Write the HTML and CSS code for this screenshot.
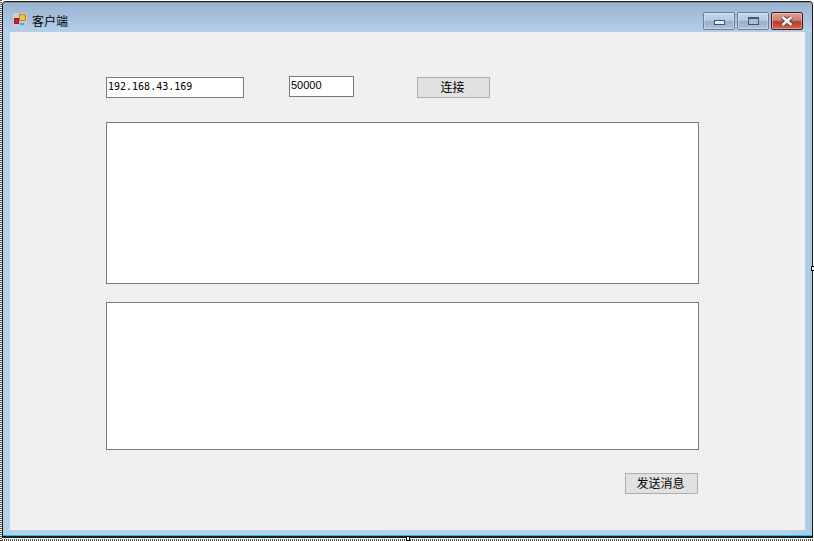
FILE: index.html
```html
<!DOCTYPE html>
<html lang="zh">
<head>
<meta charset="utf-8">
<title>客户端</title>
<link rel="stylesheet" href="styles.css">
</head>
<body>
<div class="designer">
  <div class="window">
    <div class="titlebar">
      <svg class="app-icon" width="14" height="14" viewBox="0 0 14 14">
        <rect x="0" y="0" width="14" height="14" fill="#c5ced8"/>
        <rect x="1.5" y="5.5" width="4" height="5" fill="#d9201c" stroke="#9c1a16"/>
        <rect x="6.5" y="1.5" width="6" height="6" fill="#f6c332" stroke="#b08a2c"/>
        <rect x="6.5" y="9.5" width="5" height="3" fill="#5d9be6" stroke="#a3c3ea"/>
      </svg>
      <span class="title">客户端</span>
      <div class="caption-buttons">
        <div class="cap-btn"><span class="glyph-min"></span></div>
        <div class="cap-btn"><span class="glyph-max"></span></div>
        <div class="cap-btn cap-close">
          <svg width="14" height="10" viewBox="0 0 14 10"><path d="M2.5 1 L11.5 9 M11.5 1 L2.5 9" stroke="#4a3a3a" stroke-width="4.4"/><path d="M2.5 1 L11.5 9 M11.5 1 L2.5 9" stroke="#f4f0f0" stroke-width="2.8"/></svg>
        </div>
      </div>
    </div>
    <div class="client">
      <div class="conn-row">
        <div class="input input-ip">192.168.43.169</div>
        <div class="input input-port">50000</div>
        <div class="btn btn-connect">连接</div>
      </div>
      <div class="box box-log"></div>
      <div class="box box-msg"></div>
      <div class="btn btn-send">发送消息</div>
    </div>
  </div>
  <span class="handle handle-right"></span>
  <span class="handle handle-bottom"></span>
</div>
</body>
</html>
```
FILE: styles.css
```css
* { box-sizing: border-box; }
html, body { margin: 0; padding: 0; background: #fff; overflow: hidden; }
body { font-family: "Noto Sans CJK SC", "Liberation Sans", sans-serif; font-size: 12px; color: #000; }

.designer {
  position: relative;
  width: 814px;
  height: 541px;
  padding: 1px 1px 3px 2px;
  background-image:
    repeating-linear-gradient(to bottom, #555 0 1px, #fff 1px 2px),
    repeating-linear-gradient(to right, #555 0 1px, #fff 1px 2px);
  background-size: 2px 100%, 100% 2px;
  background-position: left top, left bottom;
  background-repeat: no-repeat;
}

.window {
  width: 100%;
  height: 100%;
  display: flex;
  flex-direction: column;
  border: 1px solid #1c1c1c;
  border-radius: 4px 4px 0 0;
  border-bottom-width: 2px;
  background: linear-gradient(to right, #b7d0ea 0, #b9d1ea 780px, #a9cbe8 100%);
  box-shadow: inset 0 -1px 0 #12c4e6;
  padding: 0 6px 6px 7px;
}

.titlebar {
  flex: none;
  height: 30px;
  margin: 0 -6px 0 -7px;
  padding: 9px 9px 0 10px;
  display: flex;
  align-items: flex-start;
  border-top: 1px solid #7f8f9f;
  border-radius: 3px 3px 0 0;
  background: linear-gradient(to bottom, #9ab4d2 0, #a4bedb 12px, #b6cfe9 100%);
}
.app-icon { margin-top: 1px; flex: none; }
.title { margin: 1px 0 0 5px; line-height: 16px; font-size: 12px; }

.caption-buttons { margin-left: auto; display: flex; gap: 2px; }
.cap-btn {
  width: 32px;
  height: 18px;
  display: flex;
  align-items: center;
  justify-content: center;
  border: 1px solid #6a7d97;
  border-radius: 2px;
  background: linear-gradient(to bottom, #c6d6e8 0, #b4c9df 48%, #94b0cd 52%, #a9c3dc 100%);
  box-shadow: inset 0 0 0 1px rgba(255,255,255,0.35);
}
.glyph-min {
  width: 11px; height: 5px; margin-top: 3px;
  background: #e8ecf0;
  border: 1px solid #47556a;
}
.glyph-max {
  width: 11px; height: 8px;
  background: #aebfd2;
  border: 1px solid #47556a;
  border-top-width: 2px;
}
.cap-close {
  border-color: #4c1620;
  background: linear-gradient(to bottom, #dd9a8f 0, #d17f72 45%, #b83a24 55%, #cc6a55 100%);
}

.client {
  width: 795px;
  height: 498px;
  background: #f0f0f0;
  padding: 44px 0 0 96px;
}

.conn-row { display: flex; align-items: flex-start; height: 22px; }
.input {
  height: 21px;
  background: #fff;
  border: 1px solid #7a7a7a;
  line-height: 17px;
  padding-left: 1px;
  white-space: nowrap;
}
.input-ip {
  width: 138px;
  margin-top: 1px;
  font-family: "DejaVu Sans Mono", monospace;
  font-size: 10px;
}
.input-port {
  width: 65px;
  margin-left: 45px;
  font-family: "Liberation Sans", sans-serif;
  font-size: 11px;
  line-height: 16px;
}
.btn {
  width: 73px;
  height: 21px;
  background: #e1e1e1;
  border: 1px solid #adadad;
  text-align: center;
  line-height: 18px;
  font-size: 12px;
  padding-right: 2px;
}
.btn-connect { margin: 1px 0 0 63px; }

.box { width: 593px; background: #fff; border: 1px solid #7a7a7a; }
.box-log { height: 162px; margin-top: 24px; }
.box-msg { height: 148px; margin-top: 18px; }
.btn-send { margin: 23px 0 0 519px; }

.handle {
  position: absolute;
  width: 4px;
  height: 5px;
  background: #fff;
  border: 1px solid #000;
}
.handle-right { left: 811px; top: 266px; }
.handle-bottom { left: 406px; top: 536px; }
```
